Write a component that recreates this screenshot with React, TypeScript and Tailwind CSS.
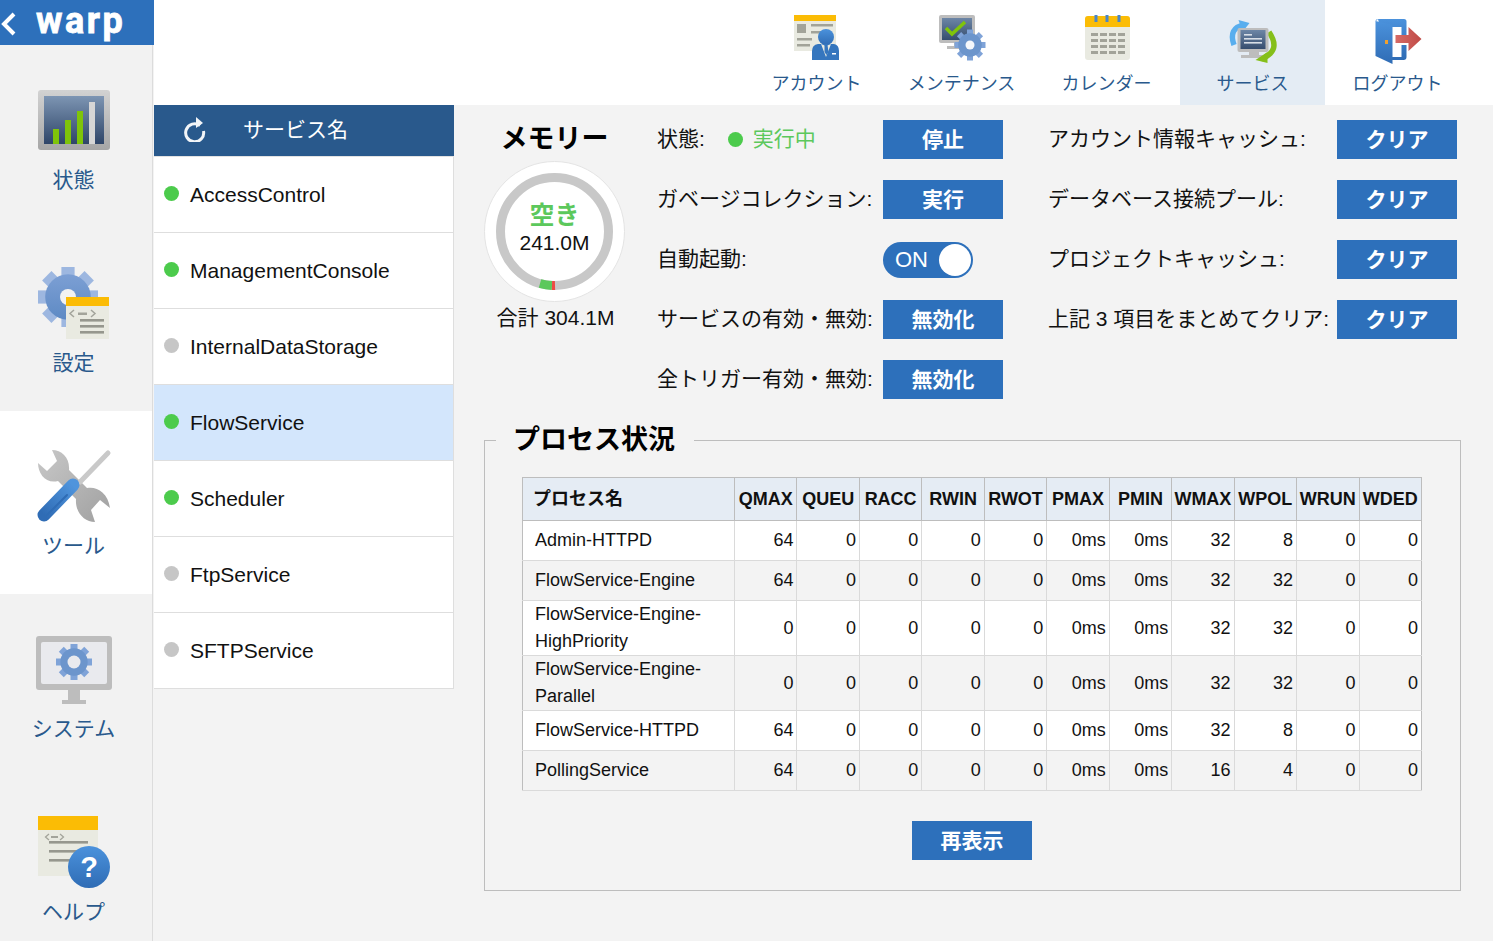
import React from 'react';

const Gear: React.FC<{ cx: number; cy: number; r: number; hole: number; holeFill: string; body: string; tooth: string; teeth?: number; toothW?: number }> = ({ cx, cy, r, hole, holeFill, body, tooth, teeth = 8, toothW }) => {
  const w = toothW ?? r * 0.44;
  return (
    <g>
      {Array.from({ length: teeth }).map((_, i) => (
        <rect key={i} x={cx - w / 2} y={cy - r} width={w} height={r} fill={tooth} transform={`rotate(${(360 / teeth) * i} ${cx} ${cy})`} />
      ))}
      <circle cx={cx} cy={cy} r={r * 0.76} fill={body} />
      <circle cx={cx} cy={cy} r={hole} fill={holeFill} />
    </g>
  );
};

const DocCode: React.FC<{ x: number; y: number; w: number; h: number; bar: number; k?: number }> = ({ x, y, w, h, bar, k = 1 }) => (
  <g>
    <rect x={x} y={y} width={w} height={h} fill="#e9eae1" />
    <rect x={x} y={y} width={w} height={bar} fill="#fbbc05" />
    <path d={`M${x + 11 * k} ${y + bar + 4 * k}l-3.5 ${3 * k} 3.5 ${3 * k}M${x + 22 * k} ${y + bar + 4 * k}l3.5 ${3 * k}-3.5 ${3 * k}`} stroke="#a3a49b" strokeWidth="1.3" fill="none" />
    <rect x={x + 13 * k} y={y + bar + 6 * k} width={7 * k} height="2" fill="#a3a49b" />
  </g>
);

const StatusIcon = () => (
  <svg width="80" height="80" viewBox="0 0 80 80">
    <defs>
      <linearGradient id="st1" x1="0" y1="0" x2="0" y2="1"><stop offset="0" stopColor="#d2d2d2" /><stop offset="1" stopColor="#a6a6a6" /></linearGradient>
      <linearGradient id="st2" x1="0" y1="0" x2="0" y2="1"><stop offset="0" stopColor="#7d95b3" /><stop offset="1" stopColor="#2e4568" /></linearGradient>
    </defs>
    <rect x="4" y="10" width="72" height="60" rx="3" fill="url(#st1)" />
    <rect x="10" y="16" width="60" height="48" fill="url(#st2)" />
    <rect x="19" y="49" width="6" height="15" fill="#7fc40a" />
    <rect x="31" y="40" width="6" height="24" fill="#7fc40a" />
    <rect x="43" y="31" width="6" height="33" fill="#7fc40a" />
    <rect x="55" y="22" width="6" height="42" fill="#d6d6d6" />
  </svg>
);

const SettingsIcon = () => (
  <svg width="80" height="80" viewBox="0 0 80 80">
    <defs>
      <linearGradient id="se1" x1="0" y1="0" x2="0" y2="1"><stop offset="0" stopColor="#7c9fd4" /><stop offset="1" stopColor="#5e8ac4" /></linearGradient>
    </defs>
    <Gear cx={34} cy={34} r={30} hole={8} holeFill="#f2f2f2" body="url(#se1)" tooth="#9db7e0" />
    <rect x="32" y="34" width="43" height="42" fill="#e9eae1" />
    <rect x="32" y="34" width="43" height="9" fill="#fbbc05" />
    <path d="M40 47l-4 3.5 4 3.5M57 47l4 3.5-4 3.5" stroke="#a3a49b" strokeWidth="1.5" fill="none" />
    <rect x="44" y="49.5" width="9" height="2.5" fill="#a3a49b" />
    <rect x="46" y="56" width="24" height="2.6" fill="#96978e" />
    <rect x="46" y="62" width="24" height="2.6" fill="#96978e" />
    <rect x="46" y="68" width="24" height="2.6" fill="#96978e" />
  </svg>
);

const ToolsIcon = () => (
  <svg width="80" height="80" viewBox="0 0 80 80">
    <defs>
      <linearGradient id="tl1" x1="0" y1="0" x2="1" y2="1"><stop offset="0" stopColor="#c8c8c8" /><stop offset="1" stopColor="#a0a0a0" /></linearGradient>
      <linearGradient id="tl2" x1="1" y1="0" x2="0" y2="1"><stop offset="0" stopColor="#4f94dc" /><stop offset="1" stopColor="#2f6cb5" /></linearGradient>
    </defs>
    <path d="M18 4C28 4 36 12 35 24L53 42C62 40 74 46 76 62L66 54 57 64 61 76C50 76 41 66 42 53L24 35C12 38 4 28 4 17L13 25 23 15Z" fill="url(#tl1)" />
    <path d="M46 36L74 7" stroke="#c9c9c9" strokeWidth="5" strokeLinecap="round" />
    <path d="M10 69L39 39" stroke="url(#tl2)" strokeWidth="13" strokeLinecap="round" />
    <path d="M13 69L33 49" stroke="#2f6cb5" strokeWidth="2" strokeLinecap="round" />
  </svg>
);

const SystemIcon = () => (
  <svg width="80" height="80" viewBox="0 0 80 80">
    <rect x="2" y="7" width="76" height="54" rx="3" fill="#bdbdbd" />
    <rect x="7" y="13" width="66" height="42" rx="2" fill="#e9eaee" />
    <rect x="34" y="61" width="12" height="10" fill="#bdbdbd" />
    <rect x="28" y="71" width="24" height="4" fill="#bdbdbd" />
    <Gear cx={40} cy={33} r={18} hole={6.5} holeFill="#e9eaee" body="#6c95cc" tooth="#7fa3d8" toothW={7} />
  </svg>
);

const HelpIcon = () => (
  <svg width="80" height="80" viewBox="0 0 80 80">
    <defs>
      <linearGradient id="hp1" x1="0" y1="0" x2="0" y2="1"><stop offset="0" stopColor="#4b92dc" /><stop offset="1" stopColor="#2f6cb5" /></linearGradient>
    </defs>
    <DocCode x={4} y={4} w={60} h={60} bar={14} />
    <rect x="15" y="29" width="39" height="2.6" fill="#96978e" />
    <rect x="15" y="38" width="39" height="2.6" fill="#96978e" />
    <rect x="15" y="47" width="39" height="2.6" fill="#96978e" />
    <circle cx="55" cy="55" r="21" fill="url(#hp1)" />
    <text x="55" y="65" textAnchor="middle" fontSize="29" fontWeight="700" fill="#fff" fontFamily="Liberation Sans">?</text>
  </svg>
);

const AccountIcon = () => (
  <svg width="50" height="50" viewBox="0 0 50 50">
    <defs>
      <linearGradient id="ac1" x1="0" y1="0" x2="0" y2="1"><stop offset="0" stopColor="#4b92dc" /><stop offset="1" stopColor="#2f6cb5" /></linearGradient>
    </defs>
    <rect x="2" y="0" width="42" height="36" fill="#e9eae1" />
    <rect x="2" y="0" width="42" height="6" fill="#fbbc05" />
    <rect x="5" y="9" width="9" height="9" fill="#a2a399" />
    <rect x="19" y="9" width="22" height="2.5" fill="#a2a399" />
    <rect x="19" y="16" width="18" height="2.5" fill="#a2a399" />
    <rect x="5" y="23" width="15" height="2.5" fill="#a2a399" />
    <rect x="5" y="29" width="13" height="2.5" fill="#a2a399" />
    <circle cx="34" cy="22" r="8" fill="url(#ac1)" />
    <path d="M20 45V36q0-6 6-7h16q5 1 5 7v9Z" fill="#3576be" />
    <path d="M29 29l5 13 5-13-5 2Z" fill="#e9eae1" />
    <path d="M32.5 30h3l1 7-2 3-2-3Z" fill="#3576be" />
    <rect x="40" y="38" width="4" height="1.5" fill="#fff" />
  </svg>
);

const MaintenanceIcon = () => (
  <svg width="50" height="50" viewBox="0 0 50 50">
    <defs>
      <linearGradient id="mt1" x1="0" y1="0" x2="0" y2="1"><stop offset="0" stopColor="#6d86a6" /><stop offset="1" stopColor="#364d6e" /></linearGradient>
    </defs>
    <rect x="2" y="0" width="36" height="28" rx="2" fill="#bdbdbd" />
    <rect x="5" y="3" width="30" height="22" fill="url(#mt1)" />
    <path d="M9 13l6 6L28 7" stroke="#7fc40a" strokeWidth="3.5" fill="none" />
    <rect x="17" y="28" width="6" height="3" fill="#bdbdbd" />
    <rect x="10" y="31" width="18" height="3" fill="#bdbdbd" />
    <Gear cx={33} cy={30} r={15.5} hole={4.5} holeFill="#f5f7fb" body="#6c95cc" tooth="#7fa3d8" toothW={6} />
  </svg>
);

const CalendarIcon = () => (
  <svg width="50" height="50" viewBox="0 0 50 50">
    <rect x="3" y="1" width="45" height="44" rx="3" fill="#e9eae1" />
    <path d="M3 12V4q0-3 3-3h39q3 0 3 3v8Z" fill="#fbbc05" />
    {[14, 25, 37].map((x) => (
      <rect key={x} x={x - 1.5} y="0" width="3" height="7" fill="#4a86c8" />
    ))}
    {[18, 24, 30, 36].map((y) =>
      [9, 18, 27, 36].map((x) => <rect key={`${x}-${y}`} x={x} y={y} width="7" height="3" fill="#a2a399" />)
    )}
  </svg>
);

const ServiceIcon = () => (
  <svg width="50" height="50" viewBox="0 0 50 50">
    <defs>
      <linearGradient id="sv1" x1="0" y1="0" x2="0" y2="1"><stop offset="0" stopColor="#6d86a6" /><stop offset="1" stopColor="#364d6e" /></linearGradient>
    </defs>
    <path d="M6 30Q0 13 16 10" stroke="#58aeee" strokeWidth="5.5" fill="none" />
    <path d="M10.5 5L21.5 8 14.5 17Z" fill="#58aeee" />
    <path d="M41 17Q54 36 33 44" stroke="#85bf1a" strokeWidth="5.5" fill="none" />
    <rect x="9.5" y="13" width="31" height="24" rx="2" fill="#bdbdbd" />
    <rect x="12.5" y="15" width="25" height="19" fill="url(#sv1)" />
    <rect x="16" y="19" width="8" height="1.6" fill="#d8dee6" />
    <rect x="16" y="23" width="18" height="1.6" fill="#d8dee6" />
    <rect x="16" y="27" width="18" height="1.6" fill="#d8dee6" />
    <rect x="21" y="37" width="10" height="3" fill="#bdbdbd" />
    <rect x="13" y="40" width="22" height="3" fill="#bdbdbd" />
    <path d="M27.5 45L39.5 37V48Z" fill="#85bf1a" />
  </svg>
);

const LogoutIcon = () => (
  <svg width="50" height="50" viewBox="0 0 50 50">
    <defs>
      <linearGradient id="lo1" x1="0" y1="0" x2="0" y2="1"><stop offset="0" stopColor="#4b92dc" /><stop offset="1" stopColor="#2f6cb5" /></linearGradient>
      <linearGradient id="lo2" x1="0" y1="0" x2="1" y2="0"><stop offset="0" stopColor="#d66a66" /><stop offset="1" stopColor="#c04a46" /></linearGradient>
    </defs>
    <path d="M5 4H31q2.5 0 2.5 2.5V20H28.500V12H15V42H28.500V30H33.500V42q0 3-3 3H15V42ZM2.500 6.500Q2.500 4 5 4Z" fill="url(#lo1)" />
    <path d="M2.500 6L19.500 10V49L2.500 41Z" fill="url(#lo1)" />
    <rect x="12" y="25" width="3" height="4" fill="#f0a030" />
    <path d="M22.500 20H35.500V12L48.500 24 35.500 36V28H22.500Z" fill="url(#lo2)" />
  </svg>
);

const RefreshIcon = () => (
  <svg width="24" height="26" viewBox="0 0 24 26" fill="none" className="-mt-[3px]">
    <path d="M17 6.500A9 9 0 1 0 20.500 12" transform="translate(0 3)" stroke="#f2f5f8" strokeWidth="3" />
    <path d="M13 0L20 6 13 11Z" fill="#f2f5f8" transform="translate(0 1)" />
  </svg>
);

const NavItem: React.FC<{ label: string; active?: boolean; children: React.ReactNode }> = ({ label, active, children }) => (
  <div className={`h-[183px] shrink-0 pt-[35px] pr-[5px] flex flex-col items-center ${active ? 'bg-white' : ''}`}>
    {children}
    <span className="mt-[7px] text-[21px] leading-[26px] text-[#29598c]">{label}</span>
  </div>
);

const TopItem: React.FC<{ label: string; active?: boolean; shift?: boolean; children: React.ReactNode }> = ({ label, active, shift, children }) => (
  <div className={`w-[145px] h-[105px] pt-[15px] flex flex-col items-center ${shift ? 'pr-[2px]' : ''} ${active ? 'bg-[#e4ecf4]' : ''}`}>
    {children}
    <span className="mt-[7px] text-[18px] leading-[24px] text-[#29598c]">{label}</span>
  </div>
);

const services = [
  { name: 'AccessControl', on: true },
  { name: 'ManagementConsole', on: true },
  { name: 'InternalDataStorage', on: false },
  { name: 'FlowService', on: true, selected: true },
  { name: 'Scheduler', on: true },
  { name: 'FtpService', on: false },
  { name: 'SFTPService', on: false },
];

const columns = ['QMAX', 'QUEU', 'RACC', 'RWIN', 'RWOT', 'PMAX', 'PMIN', 'WMAX', 'WPOL', 'WRUN', 'WDED'];

const processes: { name: string; values: string[]; tall?: boolean }[] = [
  { name: 'Admin-HTTPD', values: ['64', '0', '0', '0', '0', '0ms', '0ms', '32', '8', '0', '0'] },
  { name: 'FlowService-Engine', values: ['64', '0', '0', '0', '0', '0ms', '0ms', '32', '32', '0', '0'] },
  { name: 'FlowService-Engine-HighPriority', values: ['0', '0', '0', '0', '0', '0ms', '0ms', '32', '32', '0', '0'], tall: true },
  { name: 'FlowService-Engine-Parallel', values: ['0', '0', '0', '0', '0', '0ms', '0ms', '32', '32', '0', '0'], tall: true },
  { name: 'FlowService-HTTPD', values: ['64', '0', '0', '0', '0', '0ms', '0ms', '32', '8', '0', '0'] },
  { name: 'PollingService', values: ['64', '0', '0', '0', '0', '0ms', '0ms', '16', '4', '0', '0'] },
];

const ActionButton: React.FC<{ children: React.ReactNode }> = ({ children }) => (
  <button className="w-[120px] h-[39px] bg-[#2d70bb] text-white text-[21px] font-bold leading-none pb-[1px]">{children}</button>
);

const Label: React.FC<{ children: React.ReactNode }> = ({ children }) => (
  <span className="pb-[1px] text-[21px] text-[#111] whitespace-nowrap">{children}</span>
);

const MemoryRing = () => (
  <div className="relative w-[141px] h-[141px] mt-[9px] rounded-full bg-white border border-[#e4e4e4] flex flex-col items-center">
    <svg className="absolute inset-0" width="139" height="139" viewBox="0 0 139 139" fill="none">
      <circle cx="69.5" cy="69.5" r="54" stroke="#c8c8c8" strokeWidth="9" />
      <path d="M55 121.5A54 54 0 0 0 67 123.5" stroke="#5cc85c" strokeWidth="9" />
      <path d="M67 123.5A54 54 0 0 0 70 123.5" stroke="#ee4b44" strokeWidth="9" />
    </svg>
    <span className="relative mt-[37px] text-[25px] leading-[32px] font-bold text-[#5cc85c]">空き</span>
    <span className="relative -mt-[1px] text-[21px] leading-[26px] text-[#111]">241.0M</span>
  </div>
);

export default function App() {
  return (
    <div className="flex w-full h-screen overflow-hidden bg-[#f3f3f3] font-['Liberation_Sans','Noto_Sans_CJK_JP',sans-serif]">
      {/* side nav */}
      <div className="w-[154px] shrink-0 flex flex-col">
        <div className="h-[45px] shrink-0 bg-[#2d70bb] flex items-start text-white">
          <svg width="18" height="26" viewBox="0 0 18 26" fill="none" className="mt-[11px]">
            <path d="M14 3L4 13l10 10" stroke="#fff" strokeWidth="4" />
          </svg>
          <span className="ml-[18px] mt-[3px] text-[36px] leading-[36px] font-bold tracking-[2.5px] [-webkit-text-stroke:0.8px_white] font-['Roboto',sans-serif]">warp</span>
        </div>
        <div className="flex-1 w-[153px] flex flex-col bg-[#f2f2f2] border-r border-[#dcdcdc] overflow-hidden">
          <NavItem label="状態"><StatusIcon /></NavItem>
          <NavItem label="設定"><SettingsIcon /></NavItem>
          <NavItem label="ツール" active><ToolsIcon /></NavItem>
          <NavItem label="システム"><SystemIcon /></NavItem>
          <NavItem label="ヘルプ"><HelpIcon /></NavItem>
        </div>
      </div>

      <div className="flex-1 flex flex-col min-w-0">
        {/* top bar */}
        <div className="h-[105px] shrink-0 bg-white flex justify-end pr-[23px]">
          <TopItem label="アカウント" shift><AccountIcon /></TopItem>
          <TopItem label="メンテナンス" shift><MaintenanceIcon /></TopItem>
          <TopItem label="カレンダー" shift><CalendarIcon /></TopItem>
          <TopItem label="サービス" active><ServiceIcon /></TopItem>
          <TopItem label="ログアウト"><LogoutIcon /></TopItem>
        </div>

        <div className="flex-1 flex min-h-0">
          {/* service list */}
          <div className="w-[300px] shrink-0">
            <div className="h-[52px] bg-[#29598c] border-b border-[#e2e2e2] flex items-center pl-[29px]">
              <RefreshIcon />
              <span className="ml-[36px] -mt-[2px] text-[21px] text-white">サービス名</span>
            </div>
            {services.map((s) => (
              <div key={s.name} className={`h-[76px] flex items-center pl-[10px] border-b border-r border-[#dedede] ${s.selected ? 'bg-[#d3e6fc]' : 'bg-white'}`}>
                <span className={`w-[15px] h-[15px] rounded-full -mt-[2px] ${s.on ? 'bg-[#4ccb4c]' : 'bg-[#c6c6c6]'}`} />
                <span className="ml-[11px] text-[21px] text-[#111]">{s.name}</span>
              </div>
            ))}
          </div>

          {/* main */}
          <div className="flex-1 pl-[30px] pr-[32px] pt-[15px] min-w-0">
            <div className="flex">
              <div className="w-[141px] shrink-0 flex flex-col items-center">
                <h2 className="h-[32px] text-[27px] leading-[38px] font-bold text-black">メモリー</h2>
                <MemoryRing />
                <span className="mt-[1px] ml-[2px] text-[21px] leading-[30px] text-[#111]">合計 304.1M</span>
              </div>
              <div className="ml-[32px] grid grid-cols-[226px_120px_45px_289px_120px] auto-rows-[39px] gap-y-[21px] items-center">
                <div className="flex items-center">
                  <Label>状態:</Label>
                  <span className="ml-[23px] w-[15px] h-[15px] rounded-full bg-[#4ccb4c]" />
                  <span className="ml-[10px] pb-[1px] text-[21px] text-[#5cc85c]">実行中</span>
                </div>
                <ActionButton>停止</ActionButton>
                <span />
                <Label>アカウント情報キャッシュ:</Label>
                <ActionButton>クリア</ActionButton>

                <Label>ガベージコレクション:</Label>
                <ActionButton>実行</ActionButton>
                <span />
                <Label>データベース接続プール:</Label>
                <ActionButton>クリア</ActionButton>

                <Label>自動起動:</Label>
                <div className="w-[90px] h-[36px] rounded-full bg-[#2d70bb] flex items-center justify-between pl-[12px] pr-[2px]">
                  <span className="text-[22px] text-white">ON</span>
                  <span className="w-[32px] h-[32px] rounded-full bg-white" />
                </div>
                <span />
                <Label>プロジェクトキャッシュ:</Label>
                <ActionButton>クリア</ActionButton>

                <Label>サービスの有効・無効:</Label>
                <ActionButton>無効化</ActionButton>
                <span />
                <Label>上記 3 項目をまとめてクリア:</Label>
                <ActionButton>クリア</ActionButton>

                <Label>全トリガー有効・無効:</Label>
                <ActionButton>無効化</ActionButton>
              </div>
            </div>

            {/* process status */}
            <fieldset className="mt-[21px] border border-[#bdbdbd] pl-[37px] pr-[36px] pb-[30px] pt-[17px] flex flex-col items-start">
              <legend className="-ml-[26px] pl-[17px] pr-[19px] text-[27px] leading-[40px] font-bold text-black">プロセス状況</legend>
              <table className="w-[900px] table-fixed border-collapse text-[18px] text-[#111]">
                <colgroup>
                  <col className="w-[212px]" />
                  {columns.map((c) => <col key={c} />)}
                </colgroup>
                <thead>
                  <tr className="h-[43px] bg-[#e5ecf4] font-bold">
                    <th className="border border-[#bdbdbd] pl-[10px] text-left font-bold">プロセス名</th>
                    {columns.map((c) => (
                      <th key={c} className="border border-[#bdbdbd] px-0 font-bold whitespace-nowrap">{c}</th>
                    ))}
                  </tr>
                </thead>
                <tbody>
                  {processes.map((p, i) => (
                    <tr key={p.name} className={`${p.tall ? 'h-[55px]' : 'h-[40px]'} ${i % 2 === 0 ? 'bg-white' : 'bg-[#f3f3f3]'}`}>
                      <td className="border border-[#dadada] border-l-[#bdbdbd] pl-[12px] pr-[20px] leading-[27px]">{p.name}</td>
                      {p.values.map((v, j) => (
                        <td key={j} className={`border border-[#dadada] pr-[3px] text-right ${j === 10 ? 'border-r-[#bdbdbd]' : ''}`}>{v}</td>
                      ))}
                    </tr>
                  ))}
                </tbody>
              </table>
              <div className="mt-[30px] ml-[390px]">
                <ActionButton>再表示</ActionButton>
              </div>
            </fieldset>
          </div>
        </div>
      </div>
    </div>
  );
}
